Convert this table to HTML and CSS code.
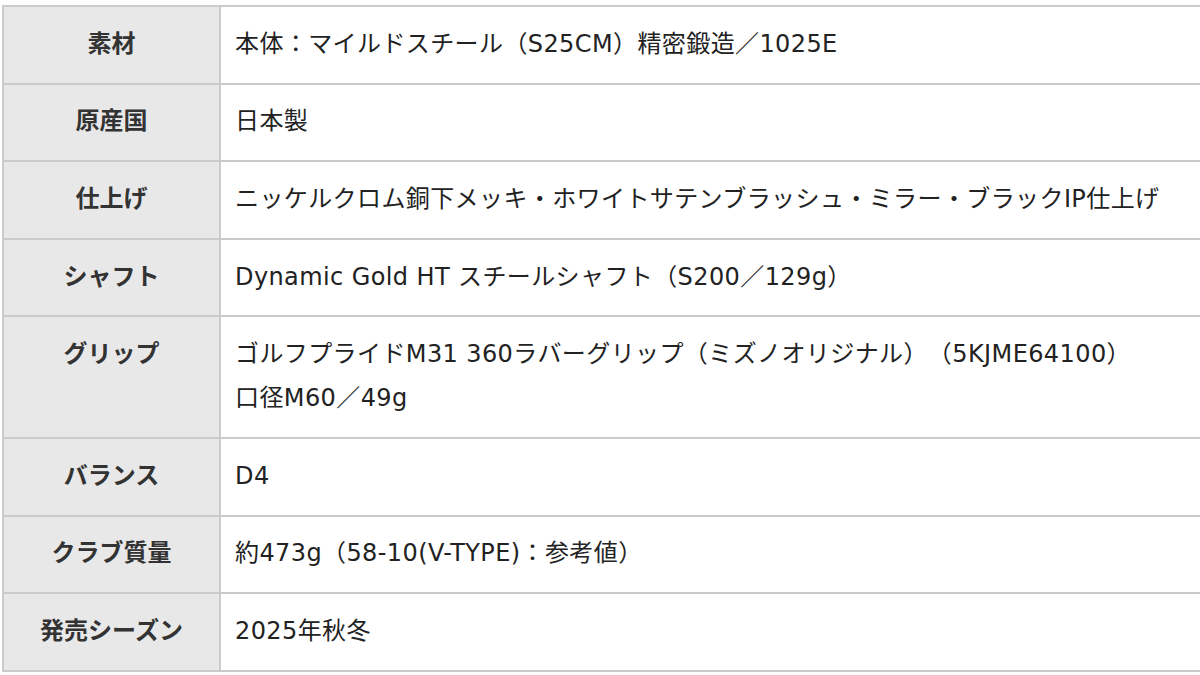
FILE: index.html
```html
<!DOCTYPE html>
<html lang="ja">
<head>
<meta charset="utf-8">
<link rel="stylesheet" href="styles.css">
</head>
<body>
<table class="spec">
  <tbody>
    <tr><th>素材</th><td>本体：マイルドスチール（S25CM）精密鍛造／1025E</td></tr>
    <tr><th>原産国</th><td>日本製</td></tr>
    <tr><th>仕上げ</th><td>ニッケルクロム銅下メッキ・ホワイトサテンブラッシュ・ミラー・ブラックIP仕上げ</td></tr>
    <tr><th>シャフト</th><td>Dynamic Gold HT スチールシャフト（S200／129g）</td></tr>
    <tr><th>グリップ</th><td>ゴルフプライドM31 360ラバーグリップ（ミズノオリジナル）（5KJME64100）<br>口径M60／49g</td></tr>
    <tr><th>バランス</th><td>D4</td></tr>
    <tr><th>クラブ質量</th><td>約473g（58-10(V-TYPE)：参考値）</td></tr>
    <tr><th>発売シーズン</th><td>2025年秋冬</td></tr>
  </tbody>
</table>
</body>
</html>
```
FILE: styles.css
```css
html, body {
  margin: 0;
  padding: 0;
  background: #ffffff;
}
body {
  padding: 5px 0 0 2px;
  overflow: hidden;
}
.spec {
  border-collapse: collapse;
  width: 1220px;
  font-family: "DejaVu Sans", "Noto Sans CJK JP", sans-serif;
  font-size: 24px;
  line-height: 44px;
  color: #222;
  text-spacing-trim: space-all;
}
.spec th, .spec td {
  border: 2px solid #cbcbcb;
  padding: 14.8px 0 16.8px;
  vertical-align: top;
}
.spec th {
  width: 215px;
  background: #e8e8e8;
  font-weight: 700;
  color: #333;
  text-align: center;
}
.spec td {
  padding-left: 14px;
  text-align: left;
  letter-spacing: 0.4px;
  white-space: nowrap;
}
```
